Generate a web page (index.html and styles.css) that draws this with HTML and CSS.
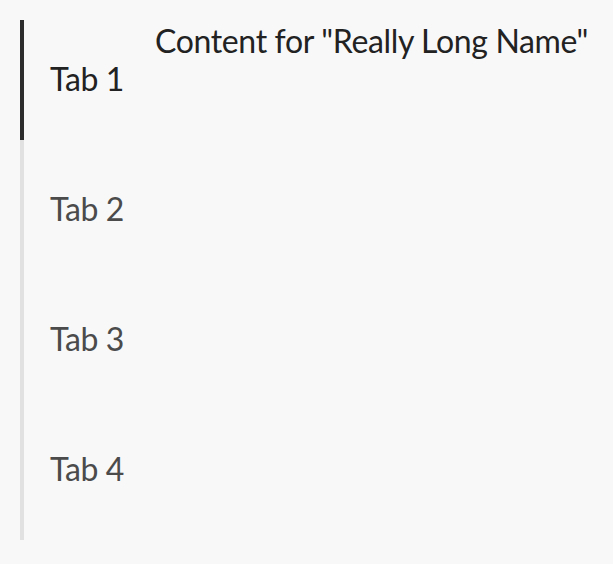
FILE: index.html
```html
<!DOCTYPE html>
<html lang="en">
<head>
<meta charset="utf-8">
<title>Tabs</title>
<link rel="stylesheet" href="styles.css">
</head>
<body>
<div class="tabs">
  <div class="tablist" role="tablist">
    <div class="tab active" role="tab">Tab 1</div>
    <div class="tab" role="tab">Tab 2</div>
    <div class="tab" role="tab">Tab 3</div>
    <div class="tab" role="tab">Tab 4</div>
  </div>
  <div class="panel" role="tabpanel">Content for "Really Long Name"</div>
</div>
</body>
</html>
```
FILE: styles.css
```css
html, body {
  margin: 0;
  padding: 0;
  background: #f8f8f8;
}
body {
  font-family: Lato, "Open Sans", sans-serif;
  font-size: 32px;
  letter-spacing: -0.35px;
  color: #222222;
}
.tabs {
  display: flex;
  flex-direction: row;
  align-items: flex-start;
  padding: 20px 0 0 20px;
}
.tablist {
  display: flex;
  flex-direction: column;
  gap: 10px;
  padding-bottom: 10px;
  border-left: 4px solid #e1e1e1;
  width: 131px;
}
.tab {
  height: 120px;
  box-sizing: border-box;
  margin-left: -4px;
  border-left: 4px solid transparent;
  padding-left: 26px;
  padding-bottom: 4px;
  display: flex;
  align-items: center;
  color: #4b4b4b;
  white-space: nowrap;
}
.tab.active {
  border-left-color: #2c2c2c;
  color: #222222;
}
.panel {
  line-height: 1.2;
  padding-top: 2px;
  white-space: nowrap;
}
```
